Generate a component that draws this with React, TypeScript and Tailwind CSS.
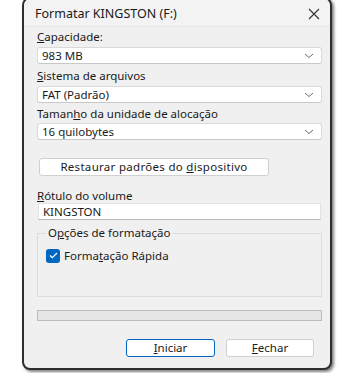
import React from "react";

function Chevron() {
  return (
    <svg width="10" height="6" viewBox="0 0 10 6" className="shrink-0">
      <path d="M1 1l4 3.5L9 1" fill="none" stroke="#6b6b6b" strokeWidth="1" />
    </svg>
  );
}

function Select({ value }: { value: string }) {
  return (
    <div className="flex h-[17px] items-center justify-between rounded-[3px] border border-[#dadada] border-b-[#c8c8c8] bg-white pl-[4px] pr-[7px]">
      <span>{value}</span>
      <Chevron />
    </div>
  );
}

function Label({ children }: { children: React.ReactNode }) {
  return <div className="leading-[16px]">{children}</div>;
}

export default function App() {
  return (
    <div className="h-[373px] w-[343px] overflow-hidden bg-white" style={{ fontFamily: '"Noto Sans", "Open Sans", sans-serif' }}>
      <div className="ml-[22px] -mt-[3px] flex h-[373px] w-[310px] flex-col rounded-[8px] border-2 border-[#2e2e2e] bg-[#f0f0f0] text-[11.5px] text-[#1a1a1a] shadow-[2px_2px_3px_rgba(0,0,0,0.5)]">
        <div className="flex h-[28px] items-center justify-between rounded-t-[8px] border-b border-[#e6e6e6] bg-[#f3f3f3] pl-[11px] pr-[10px] pt-[3px]">
          <span className="text-[12.5px]">Formatar KINGSTON (F:)</span>
          <svg width="12" height="12" viewBox="0 0 12 12">
            <path d="M1 1l10 10M11 1L1 11" stroke="#333" strokeWidth="1.1" />
          </svg>
        </div>
        <div className="flex flex-col pl-[13px] pr-[8px] pt-[2px]">
          <Label><span className="underline">C</span>apacidade:</Label>
          <div className="mt-[2px]"><Select value="983 MB" /></div>
          <div className="mt-[4px]"><Label><span className="underline">S</span>istema de arquivos</Label></div>
          <div className="mt-[2px]"><Select value="FAT (Padrão)" /></div>
          <div className="mt-[3px]"><Label>Taman<span className="underline">h</span>o da unidade de alocação</Label></div>
          <div className="mt-[1px]"><Select value="16 quilobytes" /></div>
          <div className="mt-[18px] ml-[2px] flex h-[18px] w-[230px] items-center justify-center rounded-[3px] border border-[#d0d0d0] bg-white">
            <span className="tracking-[0.3px]">Restaurar padrões do <span className="underline">d</span>ispositivo</span>
          </div>
          <div className="mt-[13px] leading-[14px]"><span className="underline">R</span>ótulo do volume</div>
          <div className="ml-[1px] mr-[1px] flex h-[17px] items-center border border-[#e3e3e3] border-b-[#b8b8b8] bg-white pl-[4px]">KINGSTON</div>
          <div className="mt-[13px] flex h-[64px] flex-col border border-[#dcdcdc]">
            <div className="-mt-[9px] ml-[8px] w-fit bg-[#f0f0f0] px-[2px] leading-[16px]">
              O<span className="underline">p</span>ções de formatação
            </div>
            <div className="mt-[6px] ml-[8px] flex items-center gap-[4px]">
              <div className="flex h-[14px] w-[14px] items-center justify-center rounded-[3px] bg-[#0067c0]">
                <svg width="9" height="7" viewBox="0 0 9 7">
                  <path d="M1 3.5l2.3 2.2L8 1" fill="none" stroke="white" strokeWidth="1.2" />
                </svg>
              </div>
              <span>Forma<span className="underline">t</span>ação Rápida</span>
            </div>
          </div>
          <div className="mt-[13px] h-[11px] border border-[#bcbcbc] bg-[#e6e6e6]" />
          <div className="mt-[18px] flex justify-end gap-[11px] pr-[8px]">
            <div className="flex h-[18px] w-[89px] items-center justify-center rounded-[3px] border border-[#0067c0] bg-white">
              <span><span className="underline">I</span>niciar</span>
            </div>
            <div className="flex h-[18px] w-[88px] items-center justify-center rounded-[3px] border border-[#d0d0d0] bg-white">
              <span><span className="underline">F</span>echar</span>
            </div>
          </div>
        </div>
      </div>
    </div>
  );
}
